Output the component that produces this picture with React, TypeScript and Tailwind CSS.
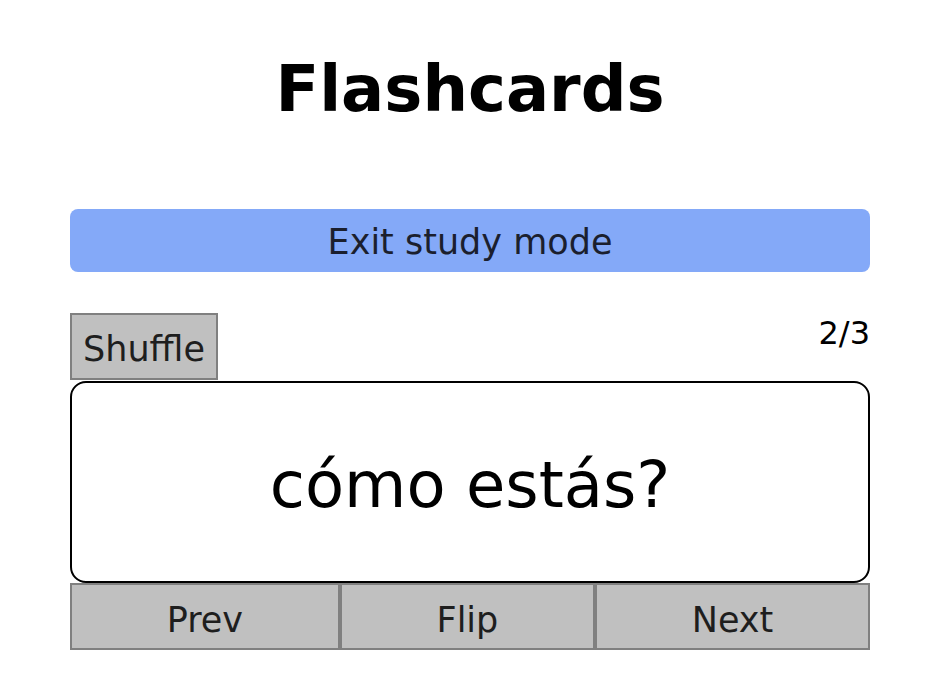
import React from "react";

export default function App() {
  const font = { fontFamily: '"DejaVu Sans", Verdana, sans-serif' };
  return (
    <div className="min-h-[695px] w-[930px] bg-white" style={font}>
      <div className="ml-[70px] w-[800px] flex flex-col">
        <h1 className="mt-[52px] text-center text-[64px] leading-[75px] font-bold text-black">
          Flashcards
        </h1>
        <button className="mt-[82px] h-[63px] w-full rounded-[8px] bg-[#84a9f8] pt-[4px] text-[35px] text-[#1b1f2e] leading-none">
          Exit study mode
        </button>
        <div className="mt-[41px] flex items-start justify-between">
          <button className="h-[67px] border-2 border-[#808080] bg-[#c0c0c0] px-[11px] pt-[5px] text-[35px] leading-none text-[#1e1e1e]">
            Shuffle
          </button>
          <span className="mt-[2px] text-[32px] leading-[37px] text-black">2/3</span>
        </div>
        <div className="mt-[1px] flex h-[202px] items-center justify-center rounded-[16px] border-2 border-black pt-[5px]">
          <span className="text-[64px] leading-none text-black">cómo estás?</span>
        </div>
        <div className="flex h-[67px]">
          <button className="flex-auto border-2 border-[#808080] bg-[#c0c0c0] pt-[8px] text-[35px] leading-none text-[#1e1e1e]">
            Prev
          </button>
          <button className="flex-auto border-2 border-[#808080] bg-[#c0c0c0] pt-[8px] text-[35px] leading-none text-[#1e1e1e]">
            Flip
          </button>
          <button className="flex-auto border-2 border-[#808080] bg-[#c0c0c0] pt-[8px] text-[35px] leading-none text-[#1e1e1e]">
            Next
          </button>
        </div>
      </div>
    </div>
  );
}
